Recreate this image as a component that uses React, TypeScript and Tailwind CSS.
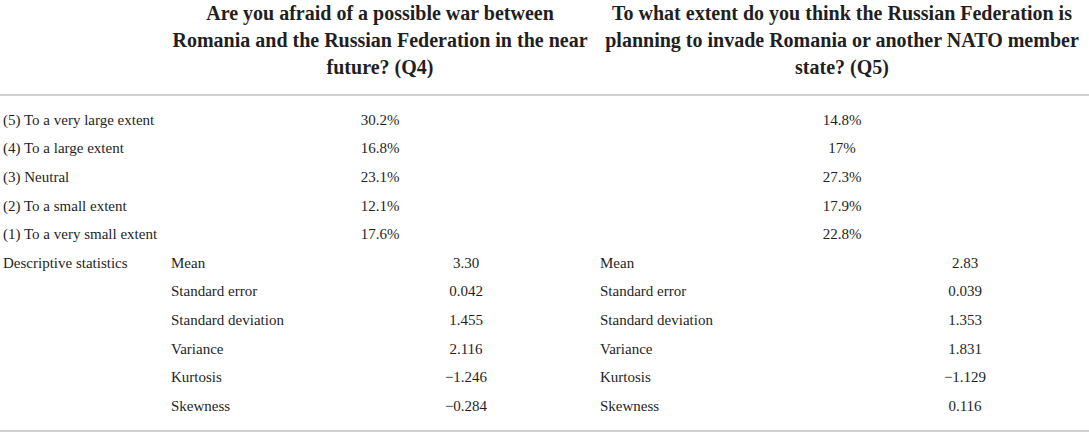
import React from 'react';

interface StatRow {
  label: string;
  q4: string;
  q5: string;
}

const scaleRows = [
  { label: '(5) To a very large extent', q4: '30.2%', q5: '14.8%' },
  { label: '(4) To a large extent', q4: '16.8%', q5: '17%' },
  { label: '(3) Neutral', q4: '23.1%', q5: '27.3%' },
  { label: '(2) To a small extent', q4: '12.1%', q5: '17.9%' },
  { label: '(1) To a very small extent', q4: '17.6%', q5: '22.8%' },
];

const stats: StatRow[] = [
  { label: 'Mean', q4: '3.30', q5: '2.83' },
  { label: 'Standard error', q4: '0.042', q5: '0.039' },
  { label: 'Standard deviation', q4: '1.455', q5: '1.353' },
  { label: 'Variance', q4: '2.116', q5: '1.831' },
  { label: 'Kurtosis', q4: '\u22121.246', q5: '\u22121.129' },
  { label: 'Skewness', q4: '\u22120.284', q5: '0.116' },
];

const App: React.FC = () => {
  return (
    <div className="w-[1089px] h-[434px] bg-white text-[#1f1f1f] font-['Liberation_Serif',serif] overflow-hidden">
      <table className="w-[1089px] table-fixed border-collapse">
        <colgroup>
          <col className="w-[165px]" />
          <col className="w-[172px]" />
          <col className="w-[258px]" />
          <col className="w-[246px]" />
          <col className="w-[248px]" />
        </colgroup>
        <thead>
          <tr className="border-b-2 border-[#d0d0d0]">
            <th></th>
            <th colSpan={2} className="text-center align-top text-[20px] font-bold leading-[27px] pt-0 pb-[13px] whitespace-nowrap">
              Are you afraid of a possible war between
              <br />
              Romania and the Russian Federation in the near
              <br />
              future? (Q4)
            </th>
            <th colSpan={2} className="text-center align-top text-[20px] font-bold leading-[27px] pt-0 pb-[13px] whitespace-nowrap">
              To what extent do you think the Russian Federation is
              <br />
              planning to invade Romania or another NATO member
              <br />
              state? (Q5)
            </th>
          </tr>
        </thead>
        <tbody className="text-[15px] leading-[20px] border-b-2 border-[#d0d0d0]">
          <tr className="h-[10.5px]"><td colSpan={5}></td></tr>
          {scaleRows.map((row) => (
            <tr key={row.label} className="h-[28.6px]">
              <td className="pl-[3px] whitespace-nowrap">{row.label}</td>
              <td colSpan={2} className="text-center">{row.q4}</td>
              <td colSpan={2} className="text-center">{row.q5}</td>
            </tr>
          ))}
          {stats.map((row, i) => (
            <tr key={row.label} className="h-[28.6px]">
              <td className="pl-[3px] whitespace-nowrap">{i === 0 ? 'Descriptive statistics' : ''}</td>
              <td className="pl-[6px] whitespace-nowrap">{row.label}</td>
              <td className="text-center">{row.q4}</td>
              <td className="pl-[5px] whitespace-nowrap">{row.label}</td>
              <td className="text-center">{row.q5}</td>
            </tr>
          ))}
          <tr className="h-[10.5px]"><td colSpan={5}></td></tr>
        </tbody>
      </table>
    </div>
  );
};

export default App;
